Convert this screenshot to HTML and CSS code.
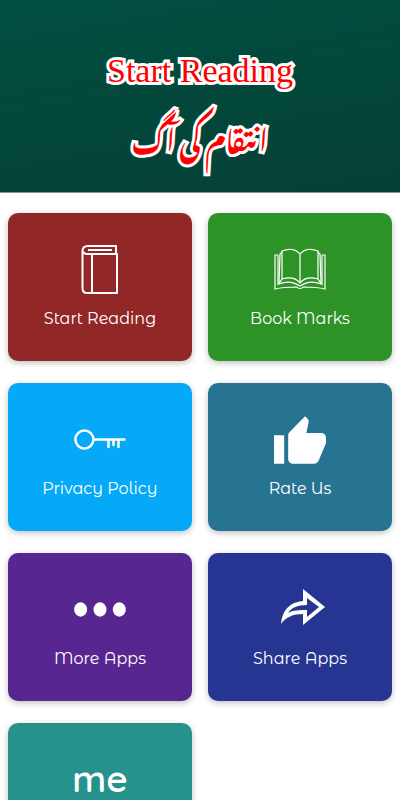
FILE: index.html
```html
<!DOCTYPE html>
<html lang="en">
  <head>
    <meta charset="utf-8">
    <meta name="viewport" content="width=device-width, initial-scale=1">
    <title>Start Reading</title>
    <link rel="stylesheet" href="styles.css">
  </head>
  <body>
    <header>
      <h1>Start Reading</h1>
      <p class="novel" lang="ur" dir="rtl">انتقام کی آگ</p>
    </header>

    <main class="menu">
      <a class="card reading" href="#reading">
        <svg class="icon line" viewBox="0 0 52 52">
          <path d="M42 10V2H14C10 2 8.500 4 8.500 7V44C8.500 47 10 49 13 49H43V10H14C10 10 9 8 9 7M38 6H14M18 10V49" />
        </svg>
        <span>Start Reading</span>
      </a>
      <a class="card marks" href="#bookmarks">
        <svg class="icon line thin" viewBox="0 0 52 52">
          <path d="M26 10C22 5 15 4 8 7V35C15 33 22 34 26 39C30 34 37 33 44 35V7C37 4 30 5 26 10V39" />
          <path d="M8 8L6 10L5 40C12 37 20 38 26 42C32 38 40 37 47 40L46 10L44 8M8 35L5 40M44 35L47 40" />
          <path d="M4 11H1V45C9 43 17 43 23 43C24 45 28 45 29 43C35 43 43 43 51 45V11H48M4 11V41M48 11V41" />
        </svg>
        <span>Book Marks</span>
      </a>
      <a class="card privacy" href="#privacy">
        <svg class="icon line" viewBox="0 0 52 52">
          <circle cx="10.400" cy="25.500" r="9" />
          <path d="M19.500 25.500H50.500M34.500 26V33M39.500 26V31M44.500 26V33" />
        </svg>
        <span>Privacy Policy</span>
      </a>
      <a class="card rate" href="#rate">
        <svg class="icon" viewBox="1 0 22 22">
          <path d="M1 21h4.300V9H1v12zm22-11c0-1.100-.9-2-2-2h-6.310l.95-4.570.03-.32c0-.41-.17-.79-.44-1.060L14.170 1 7.590 7.590C7.220 7.950 7 8.450 7 9v10c0 1.100.9 2 2 2h9c.83 0 1.540-.5 1.840-1.220l3.020-7.050c.09-.23.14-.47.14-.73z" />
        </svg>
        <span>Rate Us</span>
      </a>
      <a class="card more" href="#more">
        <svg class="icon" viewBox="0 0 52 52">
          <ellipse cx="6.600" cy="25.500" rx="6.500" ry="7.200" />
          <ellipse cx="26" cy="25.500" rx="6.500" ry="7.200" />
          <ellipse cx="45.300" cy="25.500" rx="6.500" ry="7.200" />
        </svg>
        <span>More Apps</span>
      </a>
      <a class="card share" href="#share">
        <svg class="icon" viewBox="0 0 52 52">
          <path fill-rule="evenodd" d="M29 5L51 23L29 41V30C19 30 12 33 7 40C8 26 16 18 29 17ZM33 14V21C23 21 17 24 14 29C19 26 25 26 33 26V33L45 23Z" />
        </svg>
        <span>Share Apps</span>
      </a>
      <a class="card about" href="#about">
        <b class="icon word">me</b>
      </a>
    </main>
  </body>
</html>
```

FILE: styles.css
```css
:root {
  --fonts: "Montserrat Alternates", Montserrat, Inter, sans-serif;
  --outline: #ffffff;
  --title: #ff0000;
}

* {
  box-sizing: border-box;
}

body {
  margin: 0;
  background: #ffffff;
  font-family: var(--fonts);
}

header {
  height: 193px;
  padding-top: 50px;
  border-bottom: 1px solid #8b9692;
  background: linear-gradient(170deg, #004f40, #064036);
  text-align: center;
}

h1,
.novel {
  margin: 0;
  color: var(--title);
  -webkit-text-stroke: 6px var(--outline);
  paint-order: stroke fill;
  stroke-linejoin: round;
}

h1 {
  font: 34px/42px "Liberation Serif", serif;
}

.novel {
  font: bold 28px/88px "Noto Nastaliq Urdu", "DejaVu Sans", sans-serif;
}

.menu {
  display: grid;
  grid-template-columns: 1fr 1fr;
  gap: 22px 16px;
  padding: 20px 8px;
}

.card {
  display: flex;
  flex-direction: column;
  align-items: center;
  gap: 8px;
  min-height: 148px;
  padding: 31px 8px 0;
  border-radius: 10px;
  box-shadow: 0 2px 6px rgba(0, 0, 0, 0.25);
  color: #ffffff;
  font-size: 16px;
  line-height: 30px;
  text-decoration: none;
}

.icon {
  width: 52px;
  height: 52px;
  fill: #ffffff;
}

.line {
  fill: none;
  stroke: #ffffff;
  stroke-width: 2;
}

.thin {
  stroke-width: 1.200;
}

.privacy .line {
  stroke-width: 2.500;
  stroke-linecap: round;
}

.word {
  font: 600 37px/48px Quicksand, "Liberation Sans", sans-serif;
  display: flex;
  justify-content: center;
}

.reading {
  background: #912727;
}

.marks {
  background: #2e9326;
}

.privacy {
  background: #05a9f7;
}

.rate {
  background: #277492;
}

.more {
  background: #582691;
}

.share {
  background: #263592;
}

.about {
  background: #27928c;
}
```
